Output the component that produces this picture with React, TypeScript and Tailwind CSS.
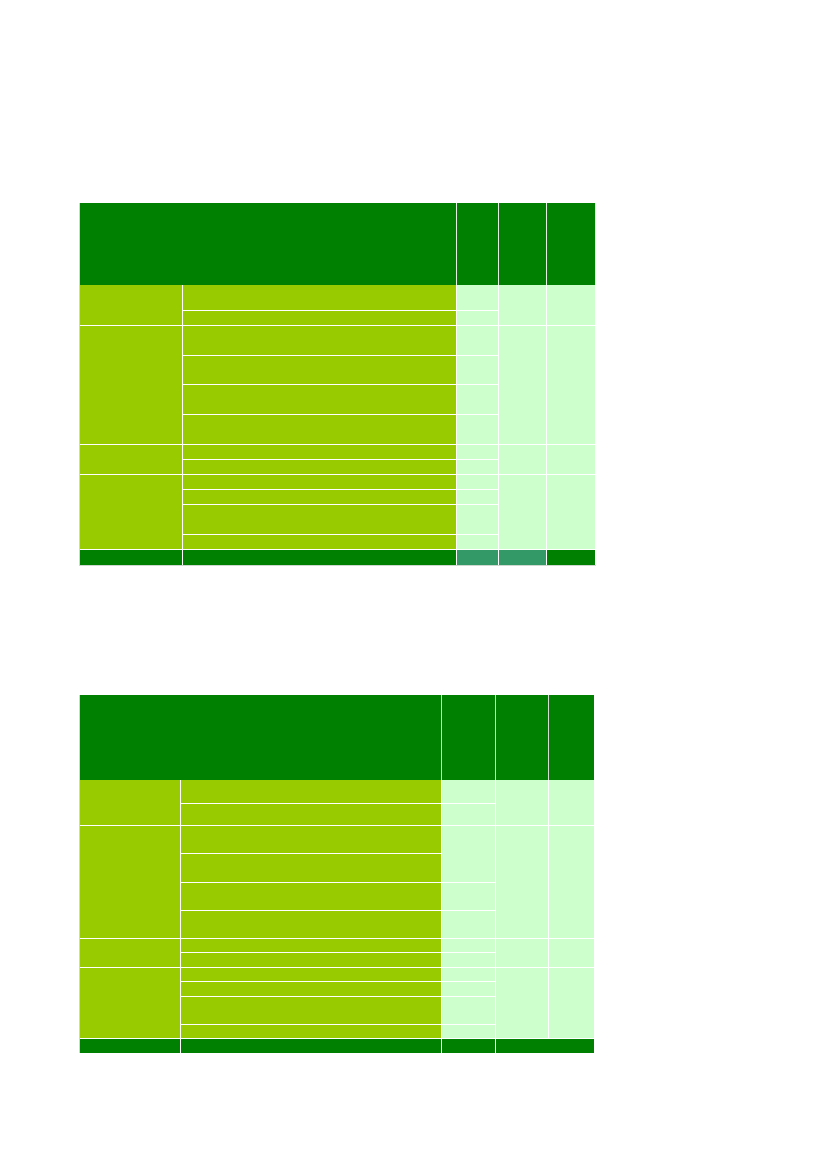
import React from "react";

type Cell = { c: string; bg: string };

const LIME = "bg-[#99cc00]";
const LIGHT = "bg-[#ccffcc]";
const DARK = "bg-[#008000]";
const MID = "bg-[#339966]";

const table1Body: Cell[] = [
  // col 1
  { c: "col-start-1 row-start-1 row-span-2", bg: LIME },
  { c: "col-start-1 row-start-3 row-span-4", bg: LIME },
  { c: "col-start-1 row-start-7 row-span-2", bg: LIME },
  { c: "col-start-1 row-start-9 row-span-4", bg: LIME },
  { c: "col-start-1 row-start-13", bg: DARK },
  // col 2
  { c: "col-start-2 row-start-1", bg: LIME },
  { c: "col-start-2 row-start-2", bg: LIME },
  { c: "col-start-2 row-start-3", bg: LIME },
  { c: "col-start-2 row-start-4", bg: LIME },
  { c: "col-start-2 row-start-5", bg: LIME },
  { c: "col-start-2 row-start-6", bg: LIME },
  { c: "col-start-2 row-start-7", bg: LIME },
  { c: "col-start-2 row-start-8", bg: LIME },
  { c: "col-start-2 row-start-9", bg: LIME },
  { c: "col-start-2 row-start-10", bg: LIME },
  { c: "col-start-2 row-start-11", bg: LIME },
  { c: "col-start-2 row-start-12", bg: LIME },
  { c: "col-start-2 row-start-13", bg: DARK },
  // col 3
  { c: "col-start-3 row-start-1", bg: LIGHT },
  { c: "col-start-3 row-start-2", bg: LIGHT },
  { c: "col-start-3 row-start-3", bg: LIGHT },
  { c: "col-start-3 row-start-4", bg: LIGHT },
  { c: "col-start-3 row-start-5", bg: LIGHT },
  { c: "col-start-3 row-start-6", bg: LIGHT },
  { c: "col-start-3 row-start-7", bg: LIGHT },
  { c: "col-start-3 row-start-8", bg: LIGHT },
  { c: "col-start-3 row-start-9", bg: LIGHT },
  { c: "col-start-3 row-start-10", bg: LIGHT },
  { c: "col-start-3 row-start-11", bg: LIGHT },
  { c: "col-start-3 row-start-12", bg: LIGHT },
  { c: "col-start-3 row-start-13", bg: MID },
  // col 4
  { c: "col-start-4 row-start-1 row-span-2", bg: LIGHT },
  { c: "col-start-4 row-start-3 row-span-4", bg: LIGHT },
  { c: "col-start-4 row-start-7 row-span-2", bg: LIGHT },
  { c: "col-start-4 row-start-9 row-span-4", bg: LIGHT },
  { c: "col-start-4 row-start-13", bg: MID },
  // col 5
  { c: "col-start-5 row-start-1 row-span-2", bg: LIGHT },
  { c: "col-start-5 row-start-3 row-span-4", bg: LIGHT },
  { c: "col-start-5 row-start-7 row-span-2", bg: LIGHT },
  { c: "col-start-5 row-start-9 row-span-4", bg: LIGHT },
  { c: "col-start-5 row-start-13", bg: DARK },
];

const table2Body: Cell[] = [
  // col 1
  { c: "col-start-1 row-start-1 row-span-2", bg: LIME },
  { c: "col-start-1 row-start-3 row-span-4", bg: LIME },
  { c: "col-start-1 row-start-7 row-span-2", bg: LIME },
  { c: "col-start-1 row-start-9 row-span-4", bg: LIME },
  { c: "col-start-1 row-start-13", bg: DARK },
  // col 2
  { c: "col-start-2 row-start-1", bg: LIME },
  { c: "col-start-2 row-start-2", bg: LIME },
  { c: "col-start-2 row-start-3", bg: LIME },
  { c: "col-start-2 row-start-4", bg: LIME },
  { c: "col-start-2 row-start-5", bg: LIME },
  { c: "col-start-2 row-start-6", bg: LIME },
  { c: "col-start-2 row-start-7", bg: LIME },
  { c: "col-start-2 row-start-8", bg: LIME },
  { c: "col-start-2 row-start-9", bg: LIME },
  { c: "col-start-2 row-start-10", bg: LIME },
  { c: "col-start-2 row-start-11", bg: LIME },
  { c: "col-start-2 row-start-12", bg: LIME },
  { c: "col-start-2 row-start-13", bg: DARK },
  // col 3
  { c: "col-start-3 row-start-1", bg: LIGHT },
  { c: "col-start-3 row-start-2", bg: LIGHT },
  { c: "col-start-3 row-start-3 row-span-2", bg: LIGHT },
  { c: "col-start-3 row-start-5", bg: LIGHT },
  { c: "col-start-3 row-start-6", bg: LIGHT },
  { c: "col-start-3 row-start-7", bg: LIGHT },
  { c: "col-start-3 row-start-8", bg: LIGHT },
  { c: "col-start-3 row-start-9", bg: LIGHT },
  { c: "col-start-3 row-start-10", bg: LIGHT },
  { c: "col-start-3 row-start-11", bg: LIGHT },
  { c: "col-start-3 row-start-12", bg: LIGHT },
  { c: "col-start-3 row-start-13", bg: DARK },
  // col 4
  { c: "col-start-4 row-start-1 row-span-2", bg: LIGHT },
  { c: "col-start-4 row-start-3 row-span-4", bg: LIGHT },
  { c: "col-start-4 row-start-7 row-span-2", bg: LIGHT },
  { c: "col-start-4 row-start-9 row-span-4", bg: LIGHT },
  { c: "col-start-4 col-span-2 row-start-13", bg: DARK },
  // col 5
  { c: "col-start-5 row-start-1 row-span-2", bg: LIGHT },
  { c: "col-start-5 row-start-3 row-span-4", bg: LIGHT },
  { c: "col-start-5 row-start-7 row-span-2", bg: LIGHT },
  { c: "col-start-5 row-start-9 row-span-4", bg: LIGHT },
];

function Table1() {
  return (
    <div className="w-[517px] border-l border-b border-[#cfd8cf]">
      <div className="grid h-[82px] grid-cols-[102px_273px_41px_47px_48px] gap-x-px bg-[#e4ece4]">
        <div className={`col-span-2 ${DARK}`} />
        <div className={DARK} />
        <div className={DARK} />
        <div className={DARK} />
      </div>
      <div className="grid grid-cols-[102px_273px_41px_47px_48px] grid-rows-[25px_14px_29px_28px_29px_29px_14px_14px_14px_14px_29px_14px_15px] gap-px bg-white">
        {table1Body.map((cell, i) => (
          <div key={i} className={`${cell.c} ${cell.bg}`} />
        ))}
      </div>
    </div>
  );
}

function Table2() {
  return (
    <div className="w-[515px] border-l border-[#cfd8cf]">
      <div className="grid h-[85px] grid-cols-[100px_260px_53px_52px_45px] gap-x-px bg-[#d4ded4]">
        <div className={`col-span-2 ${DARK}`} />
        <div className={DARK} />
        <div className={DARK} />
        <div className={DARK} />
      </div>
      <div className="grid grid-cols-[100px_260px_53px_52px_45px] grid-rows-[23px_21px_27px_28px_27px_27px_13px_14px_13px_14px_27px_13px_14px] gap-px bg-white">
        {table2Body.map((cell, i) => (
          <div key={i} className={`${cell.c} ${cell.bg}`} />
        ))}
      </div>
    </div>
  );
}

export default function App() {
  return (
    <div
      className="min-h-[1170px] w-[827px] bg-white pl-[79px] pt-[203px]"
      style={{ fontFamily: '"Liberation Sans", Arial, sans-serif' }}
    >
      <Table1 />
      <div className="mt-[129px]">
        <Table2 />
      </div>
    </div>
  );
}
